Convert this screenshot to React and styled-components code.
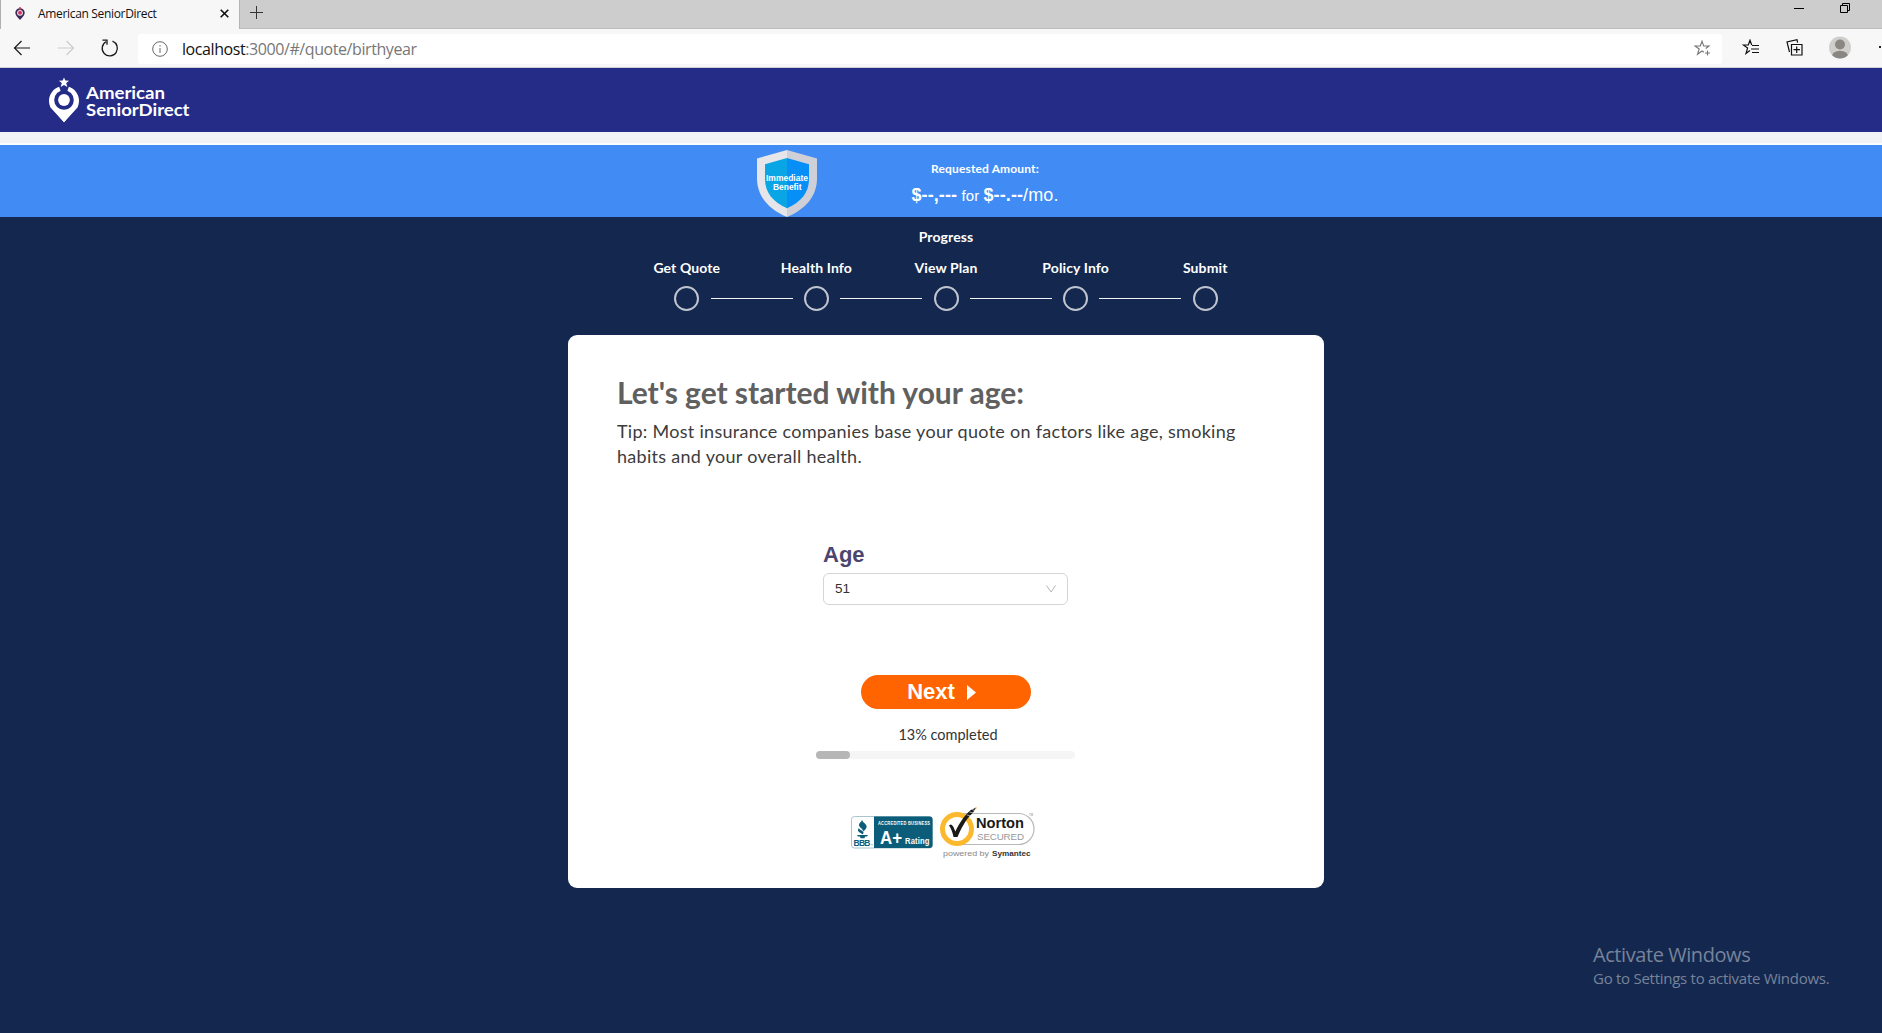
import React from "react";
import styled, { createGlobalStyle } from "styled-components";

const lato = `Lato, "Open Sans", sans-serif`;
const arial = `"Liberation Sans", Arial, sans-serif`;
const segoe = `"Open Sans", "Noto Sans", sans-serif`;

const GlobalStyle = createGlobalStyle`
  * { box-sizing: border-box; }
  html, body { margin: 0; overflow: hidden; background: #14284f; }
  body { font-family: ${lato}; }
  svg { display: block; flex: none; }
`;

const Page = styled.div`
  width: 1892px;
  height: 1033px;
  display: flex;
  flex-direction: column;
  overflow: hidden;
`;

/* Browser chrome */
const TabStrip = styled.div`
  height: 29px;
  display: flex;
  background: #cdcdcd;
  border-bottom: 1px solid #bdbdbd;
`;
const Tab = styled.div`
  width: 240px;
  height: 29px;
  padding: 0 10px 2px 14px;
  display: flex;
  align-items: center;
  background: #f7f7f7;
  border-left: 1px solid #b0b0b0;
  border-right: 1px solid #b4b4b4;
`;
const TabTitle = styled.span`
  flex: 1;
  margin-left: 13px;
  font: 12px/18px ${segoe};
  letter-spacing: -0.33px;
  color: #111;
  white-space: nowrap;
`;
const NewTab = styled.div`
  padding: 6px 0 0 10px;
`;
const WindowButtons = styled.div`
  margin-left: auto;
  padding: 3px 42px 0 0;
  display: flex;
  gap: 36px;
`;
const Toolbar = styled.div`
  height: 39px;
  padding: 0 0 1px 13px;
  display: flex;
  align-items: center;
  background: #f7f7f7;
  border-bottom: 1px solid #cfcfd6;
`;
const NavButtons = styled.div`
  flex: none;
  width: 125px;
  display: flex;
  gap: 26px;
`;
const AddressBar = styled.div`
  flex: none;
  width: 1584px;
  height: 30px;
  margin-top: 2px;
  padding: 0 11px 0 14px;
  display: flex;
  align-items: center;
  background: #fff;
  border-radius: 3px;
`;
const Url = styled.span`
  flex: 1;
  margin-left: 14px;
  font: 16px/22px ${segoe};
  letter-spacing: -0.42px;
  color: #777;
`;
const Host = styled.span`
  color: #111;
`;
const ToolbarActions = styled.div`
  padding-left: 20px;
  display: flex;
  align-items: center;
  gap: 26px;
`;

/* Site */
const Header = styled.header`
  height: 64px;
  padding: 9px 0 0 47px;
  background: #242c88;
`;
const Gap = styled.div`
  height: 13px;
  background: #f0f2f5;
  border-bottom: 2px solid #fbfdfd;
`;
const Banner = styled.div`
  height: 72px;
  padding: 4px 0 0 756px;
  display: flex;
  background: #408cf4;
  color: #fff;
`;
const Amount = styled.div`
  width: 180px;
  margin-left: 77px;
  padding-top: 12px;
  text-align: center;
  white-space: nowrap;
`;
const AmountLabel = styled.div`
  font: bold 12px/16px ${lato};
  letter-spacing: 0.15px;
`;
const AmountValue = styled.div`
  margin-top: 6px;
  font: 18px/24px ${arial};
  letter-spacing: 0.1px;
`;
const For = styled.span`
  font-size: 15px;
`;
const Main = styled.main`
  flex: 1;
  display: flex;
  flex-direction: column;
  align-items: center;
  background: #14284f;
`;
const ProgressTitle = styled.div`
  margin-top: 11px;
  font: bold 14px/18px ${lato};
  letter-spacing: 0.1px;
  color: #fff;
`;
const StepLabels = styled.div`
  margin-top: 13px;
  display: grid;
  grid-template-columns: repeat(5, 129.6px);
`;
const StepLabel = styled.div`
  font: bold 14px/18px ${lato};
  letter-spacing: 0.12px;
  text-align: center;
  color: #fff;
`;
const StepTrack = styled.div`
  margin-top: 9px;
  display: flex;
  align-items: center;
  gap: 11.3px;
`;
const Circle = styled.div`
  width: 25px;
  height: 25px;
  border: 2px solid #c0c4cf;
  border-radius: 50%;
`;
const Line = styled.div`
  width: 82px;
  height: 1px;
  margin-top: -1px;
  background: #f4f5f7;
`;
const Card = styled.section`
  width: 756px;
  height: 553px;
  margin-top: 24px;
  padding: 39px 50px 0 49px;
  display: flex;
  flex-direction: column;
  align-items: center;
  background: #fff;
  border-radius: 9px;
`;
const Title = styled.h1`
  align-self: flex-start;
  margin: 0;
  font: bold 30px/36px ${lato};
  letter-spacing: -0.03px;
  color: #606060;
  white-space: nowrap;
`;
const Tip = styled.p`
  align-self: flex-start;
  margin: 9px 0 0;
  font: 18px/25px ${lato};
  letter-spacing: 0.29px;
  color: #3c3c3c;
  white-space: nowrap;
`;
const Field = styled.div`
  width: 245px;
  margin-top: 73px;
`;
const Label = styled.label`
  display: block;
  font: bold 22px/26px ${arial};
  color: #4b4570;
`;
const Select = styled.div`
  height: 32px;
  margin-top: 5px;
  padding: 0 11px;
  display: flex;
  align-items: center;
  justify-content: space-between;
  border: 1px solid #d5d5d5;
  border-radius: 6px;
  font: 13.5px/30px ${arial};
  color: #333;
`;
const NextButton = styled.button`
  width: 170px;
  height: 34px;
  margin-top: 70px;
  padding: 0 8px 0 0;
  display: flex;
  align-items: center;
  justify-content: center;
  gap: 12px;
  border: 0;
  border-radius: 17px;
  background: #ff6400;
  color: #fff;
  font: bold 22px/26px ${arial};
`;
const Completed = styled.div`
  margin: 15px 0 5px 5px;
  font: 14.5px/22px ${lato};
  color: #333;
`;
const Bar = styled.div`
  width: 259px;
  height: 8px;
  border-radius: 4px;
  background: #f5f5f5;
`;
const BarFill = styled.div`
  width: ${(p) => p.$percent}%;
  height: 8px;
  border-radius: 4px;
  background: #b6b6b6;
`;
const Badges = styled.div`
  width: 190px;
  margin-top: 47px;
  display: flex;
  gap: 4px;
`;
const Watermark = styled.aside`
  position: absolute;
  left: 1593px;
  top: 942px;
  color: #77839a;
  white-space: nowrap;
`;
const WatermarkTitle = styled.div`
  font: 20px/26px ${segoe};
  letter-spacing: -0.43px;
`;
const WatermarkText = styled.div`
  font: 15px/20px ${segoe};
  letter-spacing: -0.27px;
`;

const Favicon = () => (
  <svg width="10" height="13" viewBox="0 0 10 13">
    <path d="M5 13C3 10.500.3 8.600.3 5.800a4.700 4.500 0 0 1 9.400 0C9.700 8.600 7 10.500 5 13Z" fill="#3a2858" />
    <circle cx="5" cy="5.800" r="2.900" fill="#eee" />
    <circle cx="5" cy="5.800" r="2" fill="#cf3760" />
    <path d="M5 0v3" stroke="#cf3760" strokeWidth="1.500" />
  </svg>
);

const Logo = () => (
  <svg width="145" height="48" viewBox="47 77 145 48">
    <path
      d="M60.300 90A11.500 11.500 0 0 0 53.500 105.500L64 117 74.500 105.500A11.500 11.500 0 0 0 67.700 90"
      fill="none"
      stroke="#fff"
      strokeWidth="7"
    />
    <path d="M50.800 107L64 122.300 77.200 107z" fill="#fff" />
    <circle cx="64" cy="100" r="9.800" fill="#242c88" />
    <circle cx="64" cy="100" r="5.900" fill="#fff" />
    <path
      d="M64 77.500l1.300 3 3.800.200-2.900 2.200 1.100 4-3.300-2-3.300 2 1.100-4-2.900-2.200 3.800-.2z"
      fill="#fff"
    />
    <g fill="#fff" fontFamily={lato} fontWeight="bold" fontSize="17.500">
      <text x="86" y="99.300" textLength="79" lengthAdjust="spacingAndGlyphs">American</text>
      <text x="86" y="116.300" textLength="103.500" lengthAdjust="spacingAndGlyphs">SeniorDirect</text>
    </g>
  </svg>
);

const Shield = () => (
  <svg width="62" height="69" viewBox="756 149 62 69">
    <path d="M787 150l-30 8.500v20c0 18 12 31 30 38.500z" fill="#e5e5ea" />
    <path d="M787 150l30 8.500v20c0 18-12 31-30 38.500z" fill="#cfcfd8" />
    <path d="M787 158l-22 6.200v15c0 13 8 23 22 29z" fill="#0aa5e4" />
    <path d="M787 158l22 6.200v15c0 13-8 23-22 29z" fill="#068ff6" />
    <g fill="#fff" fontFamily={arial} fontWeight="bold" fontSize="8.200">
      <text x="766" y="181" textLength="42" lengthAdjust="spacingAndGlyphs">Immediate</text>
      <text x="773" y="189.500" textLength="28.500" lengthAdjust="spacingAndGlyphs">Benefit</text>
    </g>
  </svg>
);

const BbbBadge = () => (
  <svg width="82" height="54" viewBox="851 805 82 54">
    <rect x="851.500" y="815.500" width="81" height="31.500" rx="3" fill="#fff" stroke="#a9c6d0" />
    <path d="M874 815.500h55.500a3 3 0 0 1 3 3V844a3 3 0 0 1-3 3H874z" fill="#0b5d79" />
    <g fill="#0b5d79">
      <path d="M862 818.500c0 3 5.500 4.500 4.500 8-.5 2-2.500 3-3.500 4 .5-3-4-3.500-4-6.500 0-2.500 3-3 3-5.500z" />
      <path d="M859 827c0 2 4.500 2.500 4.500 4.500 0 1-.5 1.500-1.200 2-1-2-4.300-2-4.300-4.300 0-1 .5-1.500 1-2.200z" />
      <path d="M857 834h11l-1 1.600h-2l-.5 1.700h-4l-.5-1.700h-2z" />
      <text x="853.500" y="844.500" fontFamily={arial} fontWeight="bold" fontSize="8.500" textLength="17">BBB</text>
      <circle cx="872" cy="843.800" r=".5" />
    </g>
    <g fill="#fff" fontFamily={arial} fontWeight="bold">
      <text transform="translate(878 824) scale(1 1.400)" fontSize="4" textLength="52">ACCREDITED BUSINESS</text>
      <text x="880" y="843" fontSize="17.500" textLength="22" lengthAdjust="spacingAndGlyphs">A+</text>
      <text transform="translate(905 842.500) scale(1 1.250)" fontSize="7.600" textLength="24.500">Rating</text>
    </g>
  </svg>
);

const NortonBadge = () => (
  <svg width="98" height="54" viewBox="937 805 98 54">
    <path d="M957 812.500h61.500a15.500 15.500 0 0 1 0 31H957" fill="#fff" stroke="#b9b9b9" strokeWidth="1.200" />
    <circle cx="957" cy="828" r="14.500" fill="#fff" stroke="#fcb92e" strokeWidth="5" />
    <path d="M950.500 823.500c2 0 3.500 3 4.800 7 4-8 8.500-15.500 15.500-21.500l5.500-2.500-3.500 5.500C965.500 818.500 961 828 957.500 836h-4c-1-5-2.500-8.500-4.500-11.500z" fill="#1b1a19" />
    <path d="M967 814l4 1M969.500 811l4 1M972 808.500l3 1" stroke="#fff" strokeWidth=".6" />
    <circle cx="976" cy="807" r=".8" fill="#fcb92e" />
    <g fontFamily={arial}>
      <text x="976" y="827" fontSize="15" fontWeight="bold" fill="#1b1a19" textLength="48" lengthAdjust="spacingAndGlyphs">Norton</text>
      <text x="977" y="838.500" fontSize="9.800" fill="#999" textLength="47">SECURED</text>
      <text x="943" y="855.300" fontSize="8" fill="#888" textLength="46" lengthAdjust="spacingAndGlyphs">powered by</text>
      <text x="992" y="855.300" fontSize="8" fontWeight="bold" fill="#333" textLength="38.500" lengthAdjust="spacingAndGlyphs">Symantec</text>
      <text x="1029" y="815" fontSize="2.800" fill="#888">TM</text>
    </g>
  </svg>
);

const steps = ["Get Quote", "Health Info", "View Plan", "Policy Info", "Submit"];

export default function App() {
  return (
    <>
      <GlobalStyle />
      <Page>
        <TabStrip>
          <Tab>
            <Favicon />
            <TabTitle>American SeniorDirect</TabTitle>
            <svg width="9" height="9" viewBox="0 0 9 9" stroke="#111" strokeWidth="1.600">
              <path d="M.7.7l7.600 7.600M8.300.7L.7 8.300" />
            </svg>
          </Tab>
          <NewTab>
            <svg width="13" height="13" viewBox="0 0 13 13" stroke="#333" fill="none">
              <path d="M6.500 0v13M0 6.500h13" />
            </svg>
          </NewTab>
          <WindowButtons>
            <svg width="10" height="10" viewBox="0 0 10 10" stroke="#000">
              <path d="M0 5.500h10" />
            </svg>
            <svg width="10" height="10" viewBox="0 0 10 10" stroke="#000" fill="none">
              <path d="M.5 2.500h7v7h-7zM2.500 2V.5h7v7H8" />
            </svg>
          </WindowButtons>
        </TabStrip>
        <Toolbar>
          <NavButtons>
            <svg width="18" height="18" viewBox="0 0 18 18" stroke="#1a1a1a" strokeWidth="1.200" fill="none">
              <path d="M17 9H2M8.500 2L1.500 9l7 7" />
            </svg>
            <svg width="18" height="18" viewBox="0 0 18 18" stroke="#ccc" strokeWidth="1.200" fill="none">
              <path d="M1 9h15M9.500 2l7 7-7 7" />
            </svg>
            <svg width="18" height="18" viewBox="0 0 18 18" stroke="#1a1a1a" strokeWidth="1.300" fill="none">
              <path d="M11.500 2.200A7.600 7.600 0 1 1 5 2.700M1.500 1.200H6v4.600" />
            </svg>
          </NavButtons>
          <AddressBar>
            <svg width="16" height="16" viewBox="0 0 16 16" stroke="#666" fill="none">
              <circle cx="8" cy="8" r="7.300" />
              <path d="M8 7v5M8 4.200v1.300" />
            </svg>
            <Url>
              <Host>localhost</Host>:3000/#/quote/birthyear
            </Url>
            <svg width="17" height="17" viewBox="0 0 17 17" stroke="#777" strokeWidth="1.100" fill="none">
              <path d="M10 12.300L8 11l-4.500 3.300L5.200 9 1 6h5.300L8 1.200 9.700 6H15l-3.300 2.500M13.500 10.500v5M11 13h5" />
            </svg>
          </AddressBar>
          <ToolbarActions>
            <svg width="18" height="17" viewBox="0 0 18 17" stroke="#111" strokeWidth="1.200" fill="none">
              <path d="M8 11.500L4 14.500 5.600 9 1.300 6h5L8 1.200 9.700 6M10 6.500h7M9 10h8M10 13.500h7" />
            </svg>
            <svg width="17" height="17" viewBox="0 0 17 17" stroke="#111" strokeWidth="1.200" fill="none">
              <path d="M5.500 5.500h10.500V16H5.500zM10.700 7.500V14M7.500 10.700H14M3.500 13L1 3l10-2.300.6 3" />
            </svg>
            <svg width="22" height="23" viewBox="0 0 22 23">
              <defs>
                <clipPath id="avatar"><circle cx="11" cy="11.500" r="11" /></clipPath>
              </defs>
              <g clipPath="url(#avatar)">
                <rect width="22" height="23" fill="#d0cecb" />
                <circle cx="11" cy="8.500" r="5" fill="#8a8783" />
                <ellipse cx="11" cy="20" rx="8" ry="5.300" fill="#8a8783" />
              </g>
            </svg>
            <svg width="14" height="3" viewBox="0 0 14 3" fill="#222">
              <path d="M2 0h2v2H2zM7 0h2v2H7zM12 0h2v2h-2z" />
            </svg>
          </ToolbarActions>
        </Toolbar>

        <Header><Logo /></Header>
        <Gap />
        <Banner>
          <Shield />
          <Amount>
            <AmountLabel>Requested Amount:</AmountLabel>
            <AmountValue>
              <b>$--,---</b><For> for </For><b>$--.--</b>/mo.
            </AmountValue>
          </Amount>
        </Banner>

        <Main>
          <ProgressTitle>Progress</ProgressTitle>
          <StepLabels>
            {steps.map((name) => (
              <StepLabel key={name}>{name}</StepLabel>
            ))}
          </StepLabels>
          <StepTrack>
            {steps.map((name, i) => (
              <React.Fragment key={name}>
                {i > 0 && <Line />}
                <Circle />
              </React.Fragment>
            ))}
          </StepTrack>
          <Card>
            <Title>Let's get started with your age:</Title>
            <Tip>
              Tip: Most insurance companies base your quote on factors like age, smoking
              <br />
              habits and your overall health.
            </Tip>
            <Field>
              <Label>Age</Label>
              <Select>
                51
                <svg width="10" height="8" viewBox="0 0 10 8" stroke="#b5b5b5" fill="none">
                  <path d="M.5.500L5 7 9.500.5" />
                </svg>
              </Select>
            </Field>
            <NextButton>
              Next
              <svg width="9" height="15" viewBox="0 0 9 15" fill="#fff">
                <path d="M0 0l9 7.500L0 15z" />
              </svg>
            </NextButton>
            <Completed>13% completed</Completed>
            <Bar><BarFill $percent={13} /></Bar>
            <Badges>
              <BbbBadge />
              <NortonBadge />
            </Badges>
          </Card>
        </Main>
      </Page>
      <Watermark>
        <WatermarkTitle>Activate Windows</WatermarkTitle>
        <WatermarkText>Go to Settings to activate Windows.</WatermarkText>
      </Watermark>
    </>
  );
}
